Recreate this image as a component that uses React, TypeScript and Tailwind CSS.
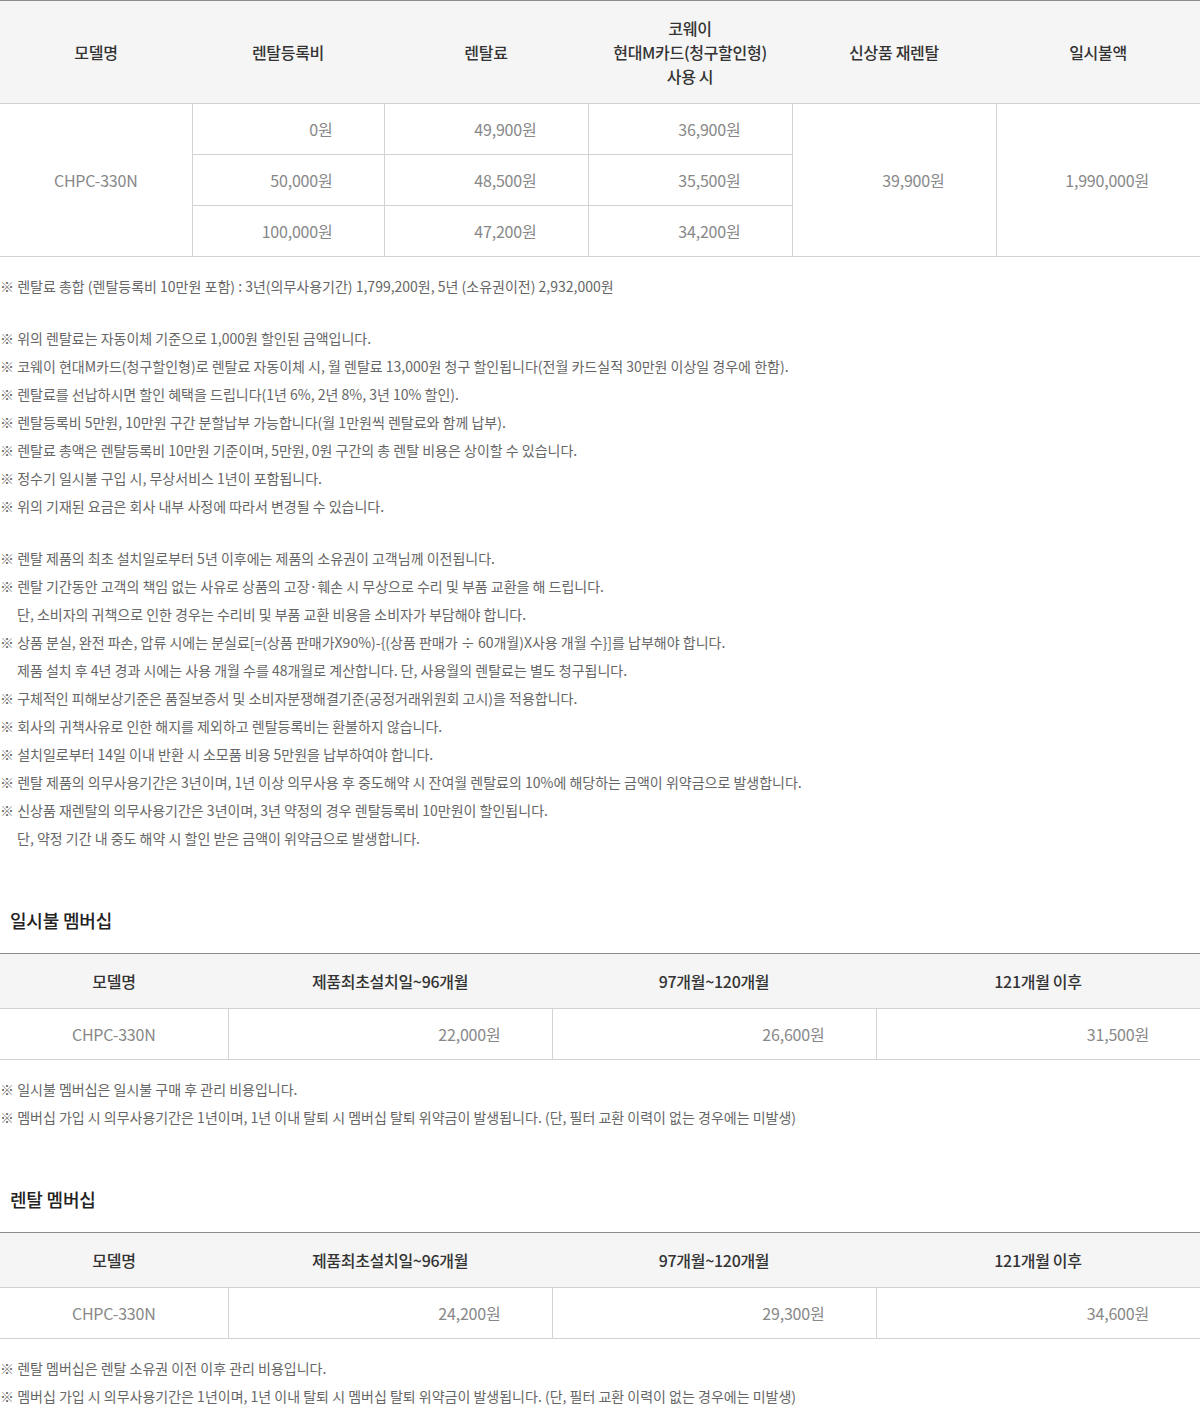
const FONT = { fontFamily: '"Noto Sans CJK KR", "Noto Sans", sans-serif' };

const mainRows = [
  { fee: "0원", rent: "49,900원", card: "36,900원" },
  { fee: "50,000원", rent: "48,500원", card: "35,500원" },
  { fee: "100,000원", rent: "47,200원", card: "34,200원" },
];

type Note = { text: string; indent?: boolean } | null;

const mainNotes: Note[] = [
  { text: "※ 렌탈료 총합 (렌탈등록비 10만원 포함) : 3년(의무사용기간) 1,799,200원, 5년 (소유권이전) 2,932,000원" },
  null,
  { text: "※ 위의 렌탈료는 자동이체 기준으로 1,000원 할인된 금액입니다." },
  { text: "※ 코웨이 현대M카드(청구할인형)로 렌탈료 자동이체 시, 월 렌탈료 13,000원 청구 할인됩니다(전월 카드실적 30만원 이상일 경우에 한함)." },
  { text: "※ 렌탈료를 선납하시면 할인 혜택을 드립니다(1년 6%, 2년 8%, 3년 10% 할인)." },
  { text: "※ 렌탈등록비 5만원, 10만원 구간 분할납부 가능합니다(월 1만원씩 렌탈료와 함께 납부)." },
  { text: "※ 렌탈료 총액은 렌탈등록비 10만원 기준이며, 5만원, 0원 구간의 총 렌탈 비용은 상이할 수 있습니다." },
  { text: "※ 정수기 일시불 구입 시, 무상서비스 1년이 포함됩니다." },
  { text: "※ 위의 기재된 요금은 회사 내부 사정에 따라서 변경될 수 있습니다." },
  null,
  { text: "※ 렌탈 제품의 최초 설치일로부터 5년 이후에는 제품의 소유권이 고객님께 이전됩니다." },
  { text: "※ 렌탈 기간동안 고객의 책임 없는 사유로 상품의 고장·훼손 시 무상으로 수리 및 부품 교환을 해 드립니다." },
  { text: "단, 소비자의 귀책으로 인한 경우는 수리비 및 부품 교환 비용을 소비자가 부담해야 합니다.", indent: true },
  { text: "※ 상품 분실, 완전 파손, 압류 시에는 분실료[=(상품 판매가X90%)-{(상품 판매가 ÷ 60개월)X사용 개월 수}]를 납부해야 합니다." },
  { text: "제품 설치 후 4년 경과 시에는 사용 개월 수를 48개월로 계산합니다. 단, 사용월의 렌탈료는 별도 청구됩니다.", indent: true },
  { text: "※ 구체적인 피해보상기준은 품질보증서 및 소비자분쟁해결기준(공정거래위원회 고시)을 적용합니다." },
  { text: "※ 회사의 귀책사유로 인한 해지를 제외하고 렌탈등록비는 환불하지 않습니다." },
  { text: "※ 설치일로부터 14일 이내 반환 시 소모품 비용 5만원을 납부하여야 합니다." },
  { text: "※ 렌탈 제품의 의무사용기간은 3년이며, 1년 이상 의무사용 후 중도해약 시 잔여월 렌탈료의 10%에 해당하는 금액이 위약금으로 발생합니다." },
  { text: "※ 신상품 재렌탈의 의무사용기간은 3년이며, 3년 약정의 경우 렌탈등록비 10만원이 할인됩니다." },
  { text: "단, 약정 기간 내 중도 해약 시 할인 받은 금액이 위약금으로 발생합니다.", indent: true },
];

function Notes({ items }: { items: Note[] }) {
  return (
    <div className="mt-[15px] text-[14px] leading-[28px] text-[#666]">
      {items.map((n, i) =>
        n === null ? (
          <div key={i} className="h-[24px]" />
        ) : (
          <p key={i} className={n.indent ? "pl-[17px]" : ""}>
            {n.text}
          </p>
        )
      )}
    </div>
  );
}

function MembershipTable({ prices }: { prices: string[] }) {
  const heads = ["모델명", "제품최초설치일~96개월", "97개월~120개월", "121개월 이후"];
  return (
    <table className="w-full border-collapse table-fixed">
      <colgroup>
        <col className="w-[228px]" />
        <col className="w-[324px]" />
        <col className="w-[324px]" />
        <col className="w-[324px]" />
      </colgroup>
      <thead>
        <tr className="h-[55px] bg-[#f5f5f5] border-t border-t-[#8c8c8c] border-b border-b-[#d2d2d2]">
          {heads.map((h) => (
            <th key={h} className="text-center font-medium text-[16px] tracking-[-0.3px] text-[#333]">
              {h}
            </th>
          ))}
        </tr>
      </thead>
      <tbody>
        <tr className="h-[51px] border-b border-b-[#d2d2d2] text-[16px] tracking-[-0.2px] text-[#888]">
          <td className="text-center">CHPC-330N</td>
          {prices.map((p, i) => (
            <td key={i} className="text-right pr-[51px] border-l border-l-[#d2d2d2]">
              {p}
            </td>
          ))}
        </tr>
      </tbody>
    </table>
  );
}

function SectionTitle({ children }: { children: string }) {
  return (
    <h3 className="mt-[54px] mb-[19px] pl-[10px] text-[18px] leading-[28px] font-medium tracking-[-0.2px] text-[#222]">
      {children}
    </h3>
  );
}

export default function App() {
  return (
    <div className="w-[1200px] bg-white pb-[10px]" style={FONT}>
      <table className="w-full border-collapse table-fixed">
        <colgroup>
          <col className="w-[192px]" />
          <col className="w-[192px]" />
          <col className="w-[204px]" />
          <col className="w-[204px]" />
          <col className="w-[204px]" />
          <col className="w-[204px]" />
        </colgroup>
        <thead>
          <tr className="h-[103px] bg-[#f5f5f5] border-t border-t-[#8c8c8c] border-b border-b-[#d2d2d2] text-[16px] tracking-[-0.3px] text-[#333]">
            <th className="font-medium text-center">모델명</th>
            <th className="font-medium text-center">렌탈등록비</th>
            <th className="font-medium text-center">렌탈료</th>
            <th className="font-medium text-center leading-[24px]">
              코웨이
              <br />
              현대M카드(청구할인형)
              <br />
              사용 시
            </th>
            <th className="font-medium text-center">신상품 재렌탈</th>
            <th className="font-medium text-center">일시불액</th>
          </tr>
        </thead>
        <tbody className="text-[16px] tracking-[-0.2px] text-[#888]">
          {mainRows.map((r, i) => (
            <tr key={i} className="h-[51px] border-b border-b-[#d2d2d2]">
              {i === 0 && (
                <td rowSpan={3} className="text-center">
                  CHPC-330N
                </td>
              )}
              <td className="text-right pr-[51px] border-l border-l-[#d2d2d2]">{r.fee}</td>
              <td className="text-right pr-[51px] border-l border-l-[#d2d2d2]">{r.rent}</td>
              <td className="text-right pr-[51px] border-l border-l-[#d2d2d2]">{r.card}</td>
              {i === 0 && (
                <>
                  <td rowSpan={3} className="text-right pr-[51px] border-l border-l-[#d2d2d2]">
                    39,900원
                  </td>
                  <td rowSpan={3} className="text-right pr-[51px] border-l border-l-[#d2d2d2]">
                    1,990,000원
                  </td>
                </>
              )}
            </tr>
          ))}
        </tbody>
      </table>

      <Notes items={mainNotes} />

      <SectionTitle>일시불 멤버십</SectionTitle>
      <MembershipTable prices={["22,000원", "26,600원", "31,500원"]} />
      <Notes
        items={[
          { text: "※ 일시불 멤버십은 일시불 구매 후 관리 비용입니다." },
          { text: "※ 멤버십 가입 시 의무사용기간은 1년이며, 1년 이내 탈퇴 시 멤버십 탈퇴 위약금이 발생됩니다. (단, 필터 교환 이력이 없는 경우에는 미발생)" },
        ]}
      />

      <SectionTitle>렌탈 멤버십</SectionTitle>
      <MembershipTable prices={["24,200원", "29,300원", "34,600원"]} />
      <Notes
        items={[
          { text: "※ 렌탈 멤버십은 렌탈 소유권 이전 이후 관리 비용입니다." },
          { text: "※ 멤버십 가입 시 의무사용기간은 1년이며, 1년 이내 탈퇴 시 멤버십 탈퇴 위약금이 발생됩니다. (단, 필터 교환 이력이 없는 경우에는 미발생)" },
        ]}
      />
    </div>
  );
}
